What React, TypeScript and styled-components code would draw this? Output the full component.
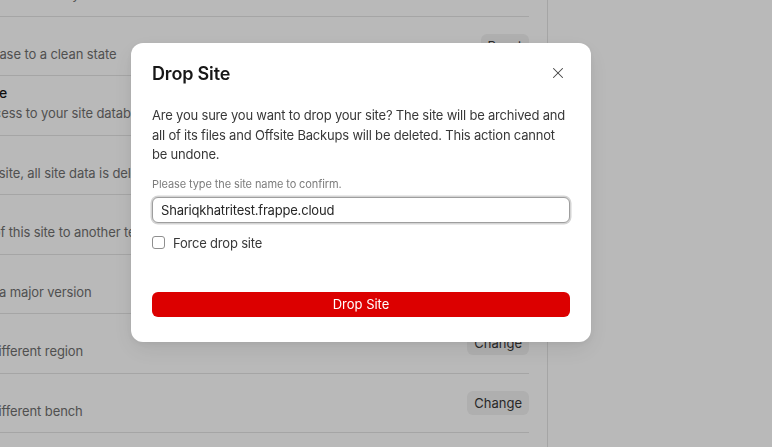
import styled, { createGlobalStyle } from 'styled-components';
import { X } from 'lucide-react';

const GlobalStyle = createGlobalStyle`
  html, body {
    margin: 0;
    padding: 0;
    height: 100%;
    overflow: hidden;
    background: #ffffff;
    font-family: Inter, "Noto Sans", "Liberation Sans", sans-serif;
    -webkit-font-smoothing: antialiased;
  }
`;

// site actions behind the dialog
const actions = [
  { title: 'Migrate Database', desc: 'Run bench migrate command on your database', button: 'Migrate' },
  { title: 'Reset Database', desc: 'Reset your site database to a clean state', button: 'Reset' },
  { title: 'Enable SQL Console', desc: 'Enable or disable access to your site database', button: 'Enable' },
  { title: 'Drop Site', desc: 'When you drop your site, all site data is deleted forever', button: 'Drop' },
  { title: 'Transfer Site', desc: 'Transfer ownership of this site to another team', button: 'Transfer' },
  { title: 'Upgrade', desc: 'Upgrade your site to a major version', button: 'Upgrade' },
  { title: 'Change Region', desc: 'Move your site to a different region', button: 'Change' },
  { title: 'Change Bench', desc: 'Move your site to a different bench', button: 'Change' },
  { title: 'Deactivate', desc: 'Deactivate your site temporarily', button: 'Deactivate' },
];

export default function App() {
  return (
    <>
      <GlobalStyle />
      <SPage>
        <SMain>
          <SList>
            {actions.map((a) => (
              <SRow key={a.title}>
                <SRowText>
                  <SRowTitle>{a.title}</SRowTitle>
                  <SRowDesc>{a.desc}</SRowDesc>
                </SRowText>
                <SGhostButton>{a.button}</SGhostButton>
              </SRow>
            ))}
          </SList>
        </SMain>
        <SAside />
      </SPage>

      <SOverlay>
        <SDialog>
          <SDialogHeader>
            <SDialogTitle>Drop Site</SDialogTitle>
            <SCloseButton aria-label="Close">
              <X size={18} strokeWidth={1.4} />
            </SCloseButton>
          </SDialogHeader>
          <SMessage>
            Are you sure you want to drop your site? The site will be archived and
            all of its files and Offsite Backups will be deleted. This action cannot
            be undone.
          </SMessage>
          <SLabel>Please type the site name to confirm.</SLabel>
          <SInput defaultValue="Shariqkhatritest.frappe.cloud" />
          <SCheckRow>
            <SCheckBox />
            <span>Force drop site</span>
          </SCheckRow>
          <SDangerButton>Drop Site</SDangerButton>
        </SDialog>
      </SOverlay>
    </>
  );
}

const SPage = styled.div`
  display: flex;
  height: 100vh;
  overflow: hidden;
`;

const SMain = styled.main`
  width: 547px;
  flex-shrink: 0;
  border-right: 1px solid #e4e4e4;
  overflow: hidden;
`;

const SAside = styled.aside`
  flex: 1;
`;

const SList = styled.div`
  margin: -43px 18px 0 -128px;
`;

const SRow = styled.div`
  box-sizing: border-box;
  height: 59.5px;
  display: flex;
  align-items: center;
  justify-content: space-between;
  border-bottom: 1px solid #e4e4e4;
`;

const SRowText = styled.div`
  display: flex;
  flex-direction: column;
  padding-bottom: 4px;
`;

const SRowTitle = styled.div`
  font-size: 14px;
  font-weight: 500;
  line-height: 20px;
  color: #171717;
  white-space: nowrap;
`;

const SRowDesc = styled.div`
  font-size: 13px;
  line-height: 20px;
  color: #6f6f6f;
  letter-spacing: -0.1px;
  white-space: nowrap;
`;

const SGhostButton = styled.button`
  height: 24px;
  padding: 0 7px;
  border: none;
  border-radius: 6px;
  background: #f1f1f1;
  color: #383838;
  font-family: inherit;
  font-size: 13px;
`;

const SOverlay = styled.div`
  position: fixed;
  inset: 0;
  background: rgba(0, 0, 0, 0.275);
  display: flex;
  align-items: flex-start;
  padding: 43px 0 0 131px;
`;

const SDialog = styled.div`
  box-sizing: border-box;
  width: 460px;
  background: #ffffff;
  border-radius: 12px;
  padding: 16px 21px 25px;
  box-shadow: 0 8px 24px rgba(0, 0, 0, 0.08), 0 2px 6px rgba(0, 0, 0, 0.06);
  display: flex;
  flex-direction: column;
`;

const SDialogHeader = styled.div`
  display: flex;
  align-items: center;
  justify-content: space-between;
  height: 28px;
`;

const SDialogTitle = styled.h2`
  margin: 0;
  font-size: 18px;
  font-weight: 600;
  color: #171717;
  letter-spacing: -0.01em;
`;

const SCloseButton = styled.button`
  width: 28px;
  height: 28px;
  margin-right: -2px;
  display: flex;
  align-items: center;
  justify-content: center;
  border: none;
  background: transparent;
  color: #444;
  padding: 0;
`;

const SMessage = styled.p`
  margin: 19px 0 0;
  font-size: 13px;
  line-height: 19.5px;
  letter-spacing: -0.2px;
  color: #383838;
`;

const SLabel = styled.label`
  margin-top: 11px;
  font-size: 11px;
  line-height: 16px;
  letter-spacing: -0.1px;
  color: #7c7c7c;
`;

const SInput = styled.input`
  box-sizing: border-box;
  margin-top: 5px;
  height: 26px;
  width: 100%;
  padding: 0 8px;
  border: 1px solid #9e9e9e;
  border-radius: 6px;
  box-shadow: 0 0 0 1.5px #d4d4d4;
  font-family: inherit;
  font-size: 13px;
  letter-spacing: -0.2px;
  color: #262626;
  outline: none;
`;

const SCheckRow = styled.div`
  margin-top: 10px;
  display: flex;
  align-items: center;
  gap: 8px;
  height: 20px;
  font-size: 13px;
  letter-spacing: -0.2px;
  color: #383838;
`;

const SCheckBox = styled.span`
  box-sizing: border-box;
  width: 13px;
  height: 13px;
  border: 1px solid #8f8f8f;
  border-radius: 3px;
  background: #ffffff;
`;

const SDangerButton = styled.button`
  margin-top: 39px;
  height: 25px;
  width: 100%;
  border: none;
  border-radius: 6px;
  background: #dc0000;
  color: #ffffff;
  font-family: inherit;
  font-size: 13px;
`;
